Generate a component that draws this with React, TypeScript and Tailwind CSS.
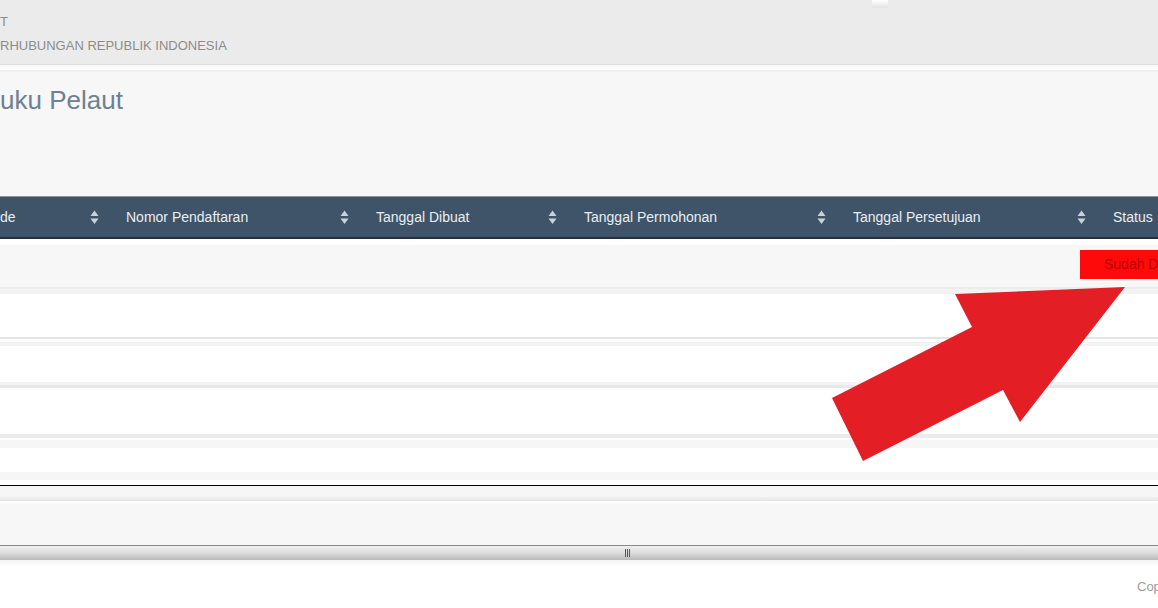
import React from "react";

const cols = "grid grid-cols-[110px_250px_208px_269px_260px_1fr]";

function SortIcon() {
  return (
    <svg width="9" height="15" viewBox="0 0 9 15" className="shrink-0">
      <path d="M4.5 0.5 L8.5 6 L0.5 6 Z" fill="#c9d2db" />
      <path d="M0.5 8.5 L8.5 8.5 L4.5 14 Z" fill="#c9d2db" />
    </svg>
  );
}

function HeadCell({ label, first }: { label: string; first?: boolean }) {
  return (
    <div className={`flex items-center justify-between pr-[11px] ${first ? "pl-0" : "pl-4"}`}>
      <span className="whitespace-nowrap">{label}</span>
      <SortIcon />
    </div>
  );
}

export default function App() {
  return (
    <div
      className="relative w-[1158px] h-[608px] overflow-hidden bg-white"
      style={{ fontFamily: '"Liberation Sans", Arial, sans-serif' }}
    >
      {/* top header */}
      <header className="relative h-[64px] bg-[#ebebeb] flex flex-col pt-[14px] text-[13px] leading-[16px] text-[#8b8b8b]">
        <div className="h-[16px]">T</div>
        <div className="mt-[8px] whitespace-nowrap">RHUBUNGAN REPUBLIK INDONESIA</div>
        <div className="absolute left-[872px] top-0 w-[16px] h-[8px] bg-gradient-to-b from-white to-[#e4e4e4]" />
      </header>
      <div className="h-[1px] bg-[#dedede]" />
      <div className="h-[5px] bg-gradient-to-b from-[#f6f6f6] to-white" />
      <div className="h-[2px] bg-[#f0f0f0]" />

      {/* title area */}
      <section className="h-[124px] bg-[#f7f7f7] pt-[13px]">
        <h1 className="text-[26px] leading-[30px] text-[#6f8091]">uku Pelaut</h1>
      </section>

      {/* table header */}
      <div className="border-t border-[#8a96a2] border-b-2 border-b-[#23313f] bg-[#3f5468] text-[14px] text-[#e9eef3]">
        <div className={`${cols} h-[40px] items-center`}>
          <HeadCell label="de" first />
          <HeadCell label="Nomor Pendaftaran" />
          <HeadCell label="Tanggal Dibuat" />
          <HeadCell label="Tanggal Permohonan" />
          <HeadCell label="Tanggal Persetujuan" />
          <div className="pl-4 whitespace-nowrap">Status</div>
        </div>
      </div>

      {/* rows */}
      <div className="h-[6px] bg-white" />
      <div className="grid grid-cols-[1080px_1fr] h-[42px] bg-[#f7f7f7] items-start">
        <div />
        <div className="mt-[5px] h-[29px] bg-[#ff0a0a] flex items-center pl-[24px] text-[14px] text-[#b80000] whitespace-nowrap">
          Sudah Disetujui
        </div>
      </div>
      <div className="h-[2px] bg-[#ececec]" />
      <div className="h-[5px] bg-[#f3f3f3]" />
      <div className="h-[43px] bg-white" />
      <div className="h-[2px] bg-[#e5e5e5]" />
      <div className="h-[3px] bg-white" />
      <div className="h-[4px] bg-[#f3f3f3]" />
      <div className="h-[36px] bg-white" />
      <div className="h-[3px] bg-[#f3f3f3]" />
      <div className="h-[3px] bg-[#e8e8e8]" />
      <div className="h-[46px] bg-white" />
      <div className="h-[4px] bg-[#ececec]" />
      <div className="h-[2px] bg-white" />
      <div className="h-[8px] bg-[#f6f6f6]" />
      <div className="h-[24px] bg-white" />
      <div className="h-[8px] bg-[#f6f6f6]" />
      <div className="h-[5px] bg-white" />
      <div className="h-[1px] bg-black" />
      <div className="h-[11px] bg-[#f6f6f6]" />
      <div className="h-[4px] bg-gradient-to-b from-[#f0f0f0] to-[#e6e6e6]" />
      <div className="h-[2px] bg-white" />
      <div className="h-[42px] bg-[#f7f7f7]" />
      <div className="h-[1px] bg-[#8a8a8a]" />

      {/* horizontal scrollbar */}
      <div className="h-[14px] flex items-center bg-gradient-to-b from-[#f0f0f0] via-[#dcdcdc] to-[#b9b9b9]">
        <div className="ml-[625px] flex gap-[1px] h-[8px]">
          <div className="w-[1px] h-full bg-[#555]" />
          <div className="w-[1px] h-full bg-[#555]" />
          <div className="w-[1px] h-full bg-[#555]" />
        </div>
      </div>
      <div className="h-[7px] bg-gradient-to-b from-[#f4f4f4] to-white" />

      {/* footer */}
      <footer className="pt-[10px] pl-[1137px] whitespace-nowrap text-[13px] text-[#9a9a9a]">
        Copyright © Kementerian Perhubungan
      </footer>

      {/* red arrow annotation */}
      <svg
        className="absolute left-0 top-0 pointer-events-none"
        width="1158"
        height="608"
        viewBox="0 0 1158 608"
      >
        <polygon
          points="832,398 972,327 955,294 1125,287 1020,422 1003,390 863,461"
          fill="#e31e25"
        />
      </svg>
    </div>
  );
}
